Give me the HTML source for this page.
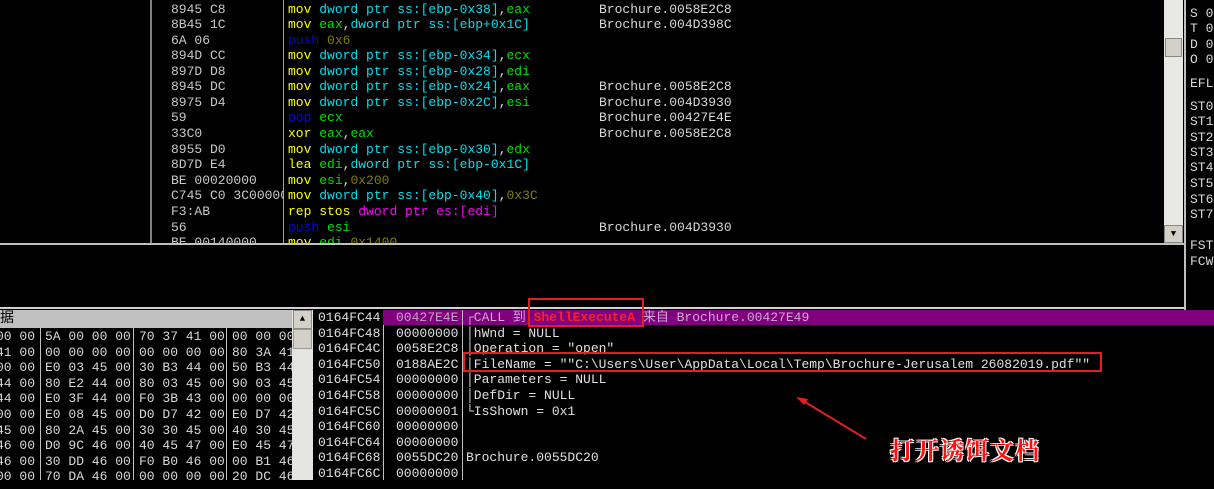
<!DOCTYPE html>
<html><head><meta charset="utf-8"><style>
body{margin:0;width:1214px;height:480px;background:#000;position:relative;overflow:hidden;font-family:"Liberation Mono","Noto Sans CJK SC",monospace;font-size:13px;}
.t{position:absolute;white-space:pre;line-height:16px;height:16px;}
.g{color:#c8c8c8}.y{color:#ffff00}.c{color:#00e0f0}.gr{color:#00e000}.b{color:#0000ff}.o{color:#808000}.m{color:#ff00ff}.w{color:#d8d8d8}
.l{position:absolute;background:#a0a0a0}
</style></head><body>
<!-- top disasm -->
<div class="l" style="left:150px;top:0;width:2px;height:243px;background:#808080"></div>
<div class="l" style="left:283px;top:0;width:1px;height:243px"></div>
<div style="position:absolute;left:1164px;top:0;width:19px;height:243px;background:#e8e8e4"></div>
<div style="position:absolute;left:1165px;top:38px;width:17px;height:19px;background:#d4d0c8;border:1px solid #888;box-sizing:border-box"></div>
<div style="position:absolute;left:1164px;top:225px;width:19px;height:18px;background:#d4d0c8;border:1px solid #888;box-sizing:border-box;font-size:9px;text-align:center;line-height:16px">▼</div>
<div class="l" style="left:0;top:243px;width:1185px;height:2px;background:#c0c0c0"></div>
<div class="l" style="left:1184px;top:0;width:2px;height:310px;background:#c0c0c0"></div>

<div class="t g" style="left:171px;top:2px">8945 C8</div><div class="t" style="left:288px;top:2px"><span class="y">mov</span> <span class="c">dword ptr ss:[ebp-0x38]</span><span class="w">,</span><span class="gr">eax</span></div>
<div class="t g" style="left:171px;top:17px">8B45 1C</div><div class="t" style="left:288px;top:17px"><span class="y">mov</span> <span class="gr">eax</span><span class="w">,</span><span class="c">dword ptr ss:[ebp+0x1C]</span></div>
<div class="t g" style="left:171px;top:33px">6A 06</div><div class="t" style="left:288px;top:33px"><span class="b">push</span> <span class="o">0x6</span></div>
<div class="t g" style="left:171px;top:48px">894D CC</div><div class="t" style="left:288px;top:48px"><span class="y">mov</span> <span class="c">dword ptr ss:[ebp-0x34]</span><span class="w">,</span><span class="gr">ecx</span></div>
<div class="t g" style="left:171px;top:64px">897D D8</div><div class="t" style="left:288px;top:64px"><span class="y">mov</span> <span class="c">dword ptr ss:[ebp-0x28]</span><span class="w">,</span><span class="gr">edi</span></div>
<div class="t g" style="left:171px;top:79px">8945 DC</div><div class="t" style="left:288px;top:79px"><span class="y">mov</span> <span class="c">dword ptr ss:[ebp-0x24]</span><span class="w">,</span><span class="gr">eax</span></div>
<div class="t g" style="left:171px;top:95px">8975 D4</div><div class="t" style="left:288px;top:95px"><span class="y">mov</span> <span class="c">dword ptr ss:[ebp-0x2C]</span><span class="w">,</span><span class="gr">esi</span></div>
<div class="t g" style="left:171px;top:110px">59</div><div class="t" style="left:288px;top:110px"><span class="b">pop</span> <span class="gr">ecx</span></div>
<div class="t g" style="left:171px;top:126px">33C0</div><div class="t" style="left:288px;top:126px"><span class="y">xor</span> <span class="gr">eax</span><span class="w">,</span><span class="gr">eax</span></div>
<div class="t g" style="left:171px;top:142px">8955 D0</div><div class="t" style="left:288px;top:142px"><span class="y">mov</span> <span class="c">dword ptr ss:[ebp-0x30]</span><span class="w">,</span><span class="gr">edx</span></div>
<div class="t g" style="left:171px;top:157px">8D7D E4</div><div class="t" style="left:288px;top:157px"><span class="y">lea</span> <span class="gr">edi</span><span class="w">,</span><span class="c">dword ptr ss:[ebp-0x1C]</span></div>
<div class="t g" style="left:171px;top:173px">BE 00020000</div><div class="t" style="left:288px;top:173px"><span class="y">mov</span> <span class="gr">esi</span><span class="w">,</span><span class="o">0x200</span></div>
<div class="t g" style="left:171px;top:188px;width:113px;overflow:hidden">C745 C0 3C000000</div><div class="t" style="left:288px;top:188px"><span class="y">mov</span> <span class="c">dword ptr ss:[ebp-0x40]</span><span class="w">,</span><span class="o">0x3C</span></div>
<div class="t g" style="left:171px;top:204px">F3:AB</div><div class="t" style="left:288px;top:204px"><span class="y">rep stos</span> <span class="m">dword ptr es:[edi]</span></div>
<div class="t g" style="left:171px;top:220px">56</div><div class="t" style="left:288px;top:220px"><span class="b">push</span> <span class="gr">esi</span></div>
<div class="t g" style="left:171px;top:235px;height:8px;overflow:hidden">BE 00140000</div><div class="t" style="left:288px;top:235px;height:8px;overflow:hidden"><span class="y">mov</span> <span class="gr">edi</span><span class="w">,</span><span class="o">0x1400</span></div>

<div class="t w" style="left:599px;top:2px">Brochure.0058E2C8</div>
<div class="t w" style="left:599px;top:17px">Brochure.004D398C</div>
<div class="t w" style="left:599px;top:79px">Brochure.0058E2C8</div>
<div class="t w" style="left:599px;top:95px">Brochure.004D3930</div>
<div class="t w" style="left:599px;top:110px">Brochure.00427E4E</div>
<div class="t w" style="left:599px;top:126px">Brochure.0058E2C8</div>
<div class="t w" style="left:599px;top:220px">Brochure.004D3930</div>

<!-- registers -->
<div class="t w" style="left:1190px;top:6px">S 0</div>
<div class="t w" style="left:1190px;top:21px">T 0</div>
<div class="t w" style="left:1190px;top:37px">D 0</div>
<div class="t w" style="left:1190px;top:52px">O 0</div>
<div class="t w" style="left:1190px;top:76px">EFL</div>
<div class="t w" style="left:1190px;top:99px">ST0</div>
<div class="t w" style="left:1190px;top:114px">ST1</div>
<div class="t w" style="left:1190px;top:130px">ST2</div>
<div class="t w" style="left:1190px;top:145px">ST3</div>
<div class="t w" style="left:1190px;top:160px">ST4</div>
<div class="t w" style="left:1190px;top:176px">ST5</div>
<div class="t w" style="left:1190px;top:192px">ST6</div>
<div class="t w" style="left:1190px;top:207px">ST7</div>
<div class="t w" style="left:1190px;top:238px">FST</div>
<div class="t w" style="left:1190px;top:254px">FCW</div>

<!-- bottom area -->
<div class="l" style="left:0;top:307px;width:1184px;height:2px;background:#d0d0d0"></div>
<div style="position:absolute;left:0;top:310px;width:292px;height:18px;background:#c0c0c0;font-size:14px;line-height:18px;color:#000">据</div>
<div style="position:absolute;left:292px;top:310px;width:21px;height:170px;background:#e4e4e0"></div>
<div style="position:absolute;left:293px;top:310px;width:19px;height:19px;background:#d4d0c8;border:1px solid #888;box-sizing:border-box;font-size:9px;text-align:center;line-height:17px">▲</div>
<div style="position:absolute;left:293px;top:329px;width:19px;height:20px;background:#d4d0c8;border:1px solid #999;box-sizing:border-box"></div>
<div class="l" style="left:40px;top:328px;width:1px;height:152px;background:#c0c0c0"></div>
<div class="l" style="left:133px;top:328px;width:1px;height:152px;background:#c0c0c0"></div>
<div class="l" style="left:226px;top:328px;width:1px;height:152px;background:#c0c0c0"></div>
<div style="position:absolute;left:0;top:329px;width:292px;height:160px;overflow:hidden;color:#d8d8d8">
<div class="t" style="left:-4px;top:0">00 00</div><div class="t" style="left:45px;top:0">5A 00 00 00</div><div class="t" style="left:139px;top:0">70 37 41 00</div><div class="t" style="left:232px;top:0">00 00 00 00</div>
<div class="t" style="left:-4px;top:15.6px">41 00</div><div class="t" style="left:45px;top:15.6px">00 00 00 00</div><div class="t" style="left:139px;top:15.6px">00 00 00 00</div><div class="t" style="left:232px;top:15.6px">80 3A 41 00</div>
<div class="t" style="left:-4px;top:31.2px">00 00</div><div class="t" style="left:45px;top:31.2px">E0 03 45 00</div><div class="t" style="left:139px;top:31.2px">30 B3 44 00</div><div class="t" style="left:232px;top:31.2px">50 B3 44 00</div>
<div class="t" style="left:-4px;top:46.8px">44 00</div><div class="t" style="left:45px;top:46.8px">80 E2 44 00</div><div class="t" style="left:139px;top:46.8px">80 03 45 00</div><div class="t" style="left:232px;top:46.8px">90 03 45 00</div>
<div class="t" style="left:-4px;top:62.4px">44 00</div><div class="t" style="left:45px;top:62.4px">E0 3F 44 00</div><div class="t" style="left:139px;top:62.4px">F0 3B 43 00</div><div class="t" style="left:232px;top:62.4px">00 00 00 00</div>
<div class="t" style="left:-4px;top:78px">00 00</div><div class="t" style="left:45px;top:78px">E0 08 45 00</div><div class="t" style="left:139px;top:78px">D0 D7 42 00</div><div class="t" style="left:232px;top:78px">E0 D7 42 00</div>
<div class="t" style="left:-4px;top:93.6px">45 00</div><div class="t" style="left:45px;top:93.6px">80 2A 45 00</div><div class="t" style="left:139px;top:93.6px">30 30 45 00</div><div class="t" style="left:232px;top:93.6px">40 30 45 00</div>
<div class="t" style="left:-4px;top:109.2px">46 00</div><div class="t" style="left:45px;top:109.2px">D0 9C 46 00</div><div class="t" style="left:139px;top:109.2px">40 45 47 00</div><div class="t" style="left:232px;top:109.2px">E0 45 47 00</div>
<div class="t" style="left:-4px;top:124.8px">46 00</div><div class="t" style="left:45px;top:124.8px">30 DD 46 00</div><div class="t" style="left:139px;top:124.8px">F0 B0 46 00</div><div class="t" style="left:232px;top:124.8px">00 B1 46 00</div>
<div class="t" style="left:-4px;top:140.4px">00 00</div><div class="t" style="left:45px;top:140.4px">70 DA 46 00</div><div class="t" style="left:139px;top:140.4px">00 00 00 00</div><div class="t" style="left:232px;top:140.4px">20 DC 46 00</div>
</div>

<!-- stack -->
<div style="position:absolute;left:383px;top:310px;width:831px;height:15px;background:#800080"></div>
<div class="l" style="left:383px;top:325px;width:1px;height:155px;background:#c0c0c0"></div>
<div class="l" style="left:462px;top:310px;width:1px;height:170px;background:#c0c0c0"></div>
<div style="position:absolute;left:318px;top:310px;color:#e0e0e0">
<div class="t" style="left:0;top:0">0164FC44</div><div class="t" style="left:0;top:15.6px">0164FC48</div><div class="t" style="left:0;top:31.2px">0164FC4C</div><div class="t" style="left:0;top:46.8px">0164FC50</div><div class="t" style="left:0;top:62.4px">0164FC54</div><div class="t" style="left:0;top:78px">0164FC58</div><div class="t" style="left:0;top:93.6px">0164FC5C</div><div class="t" style="left:0;top:109.2px">0164FC60</div><div class="t" style="left:0;top:124.8px">0164FC64</div><div class="t" style="left:0;top:140.4px">0164FC68</div><div class="t" style="left:0;top:156px">0164FC6C</div>
<div class="t" style="left:78px;top:0;color:#c8a0c8">00427E4E</div><div class="t" style="left:78px;top:15.6px">00000000</div><div class="t" style="left:78px;top:31.2px">0058E2C8</div><div class="t" style="left:78px;top:46.8px">0188AE2C</div><div class="t" style="left:78px;top:62.4px">00000000</div><div class="t" style="left:78px;top:78px">00000000</div><div class="t" style="left:78px;top:93.6px">00000001</div><div class="t" style="left:78px;top:109.2px">00000000</div><div class="t" style="left:78px;top:124.8px">00000000</div><div class="t" style="left:78px;top:140.4px">0055DC20</div><div class="t" style="left:78px;top:156px">00000000</div>
<div class="t" style="left:148px;top:0;color:#d0a8d0">┌CALL 到 <span style="color:#ff2020;font-weight:bold">ShellExecuteA</span> 来自 Brochure.00427E49</div>
<div class="t" style="left:148px;top:15.6px">│hWnd = NULL</div>
<div class="t" style="left:148px;top:31.2px">│Operation = "open"</div>
<div class="t" style="left:148px;top:46.8px">│FileName = ""C:\Users\User\AppData\Local\Temp\Brochure-Jerusalem 26082019.pdf""</div>
<div class="t" style="left:148px;top:62.4px">│Parameters = NULL</div>
<div class="t" style="left:148px;top:78px">│DefDir = NULL</div>
<div class="t" style="left:148px;top:93.6px">└IsShown = 0x1</div>
<div class="t" style="left:148px;top:140.4px">Brochure.0055DC20</div>
</div>

<div style="position:absolute;left:528px;top:298px;width:116px;height:29px;border:2px solid #e02020;box-sizing:border-box"></div>
<div style="position:absolute;left:463px;top:352px;width:639px;height:20px;border:2px solid #e02020;box-sizing:border-box"></div>
<svg style="position:absolute;left:0;top:0" width="1214" height="480"><line x1="866" y1="439" x2="800" y2="399" stroke="#e02020" stroke-width="2"/><polygon points="796,397 808,399 804,405" fill="#e02020"/></svg>
<div style="position:absolute;left:890px;top:434px;font-family:'Noto Serif CJK SC','Noto Sans CJK SC',serif;font-size:24px;line-height:30px;font-weight:bold;color:#ff1010;text-shadow:1px 1px 0 #fff,-1px -1px 0 #fff,1px -1px 0 #fff,-1px 1px 0 #fff;letter-spacing:1px">打开诱饵文档</div>
</body></html>
